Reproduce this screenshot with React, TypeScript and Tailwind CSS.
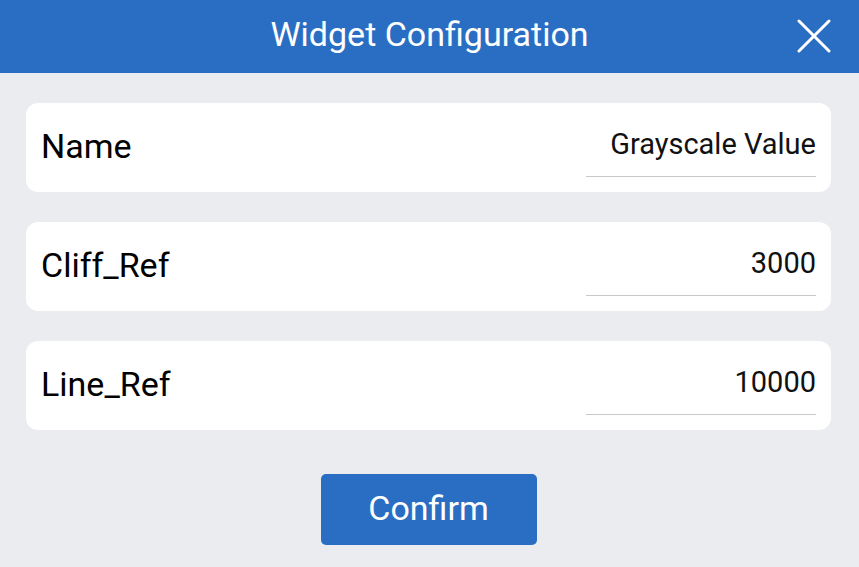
const FIELDS = [
  { label: "Name", value: "Grayscale Value" },
  { label: "Cliff_Ref", value: "3000" },
  { label: "Line_Ref", value: "10000" },
] as const

export default function App() {
  return (
    <div className="flex h-[567px] w-[859px] flex-col bg-[#ebecf0] font-['Roboto',sans-serif]">
      {/* Header */}
      <header className="relative flex h-[73px] shrink-0 items-center justify-center bg-[#2a6ec4] pb-[6px]">
        <h1 className="text-[34px] leading-none text-white">Widget Configuration</h1>
        <button className="absolute right-[28px] top-[19px] h-[34px] w-[34px]" aria-label="Close">
          <svg viewBox="0 0 34 34" className="h-full w-full" stroke="white" strokeWidth="3" strokeLinecap="round">
            <path d="M2 2 L32 32 M32 2 L2 32" />
          </svg>
        </button>
      </header>

      <div className="flex flex-col pl-[26px] pr-[28px] pt-[30px]">
        {/* Fields */}
        <div className="flex flex-col gap-[30px]">
          {FIELDS.map((f) => (
            <div
              key={f.label}
              className="flex h-[89px] items-center justify-between rounded-[12px] bg-white px-[15px]"
            >
              <span className="mb-[4px] text-[34px] leading-none text-black">{f.label}</span>
              <div className="flex w-[230px] flex-col items-end self-start pt-[27px]">
                <span className="text-[29px] leading-none text-[#111]">{f.value}</span>
                <div className="mt-[17px] h-px w-full bg-[#c8c9cd]" />
              </div>
            </div>
          ))}
        </div>

        {/* Confirm */}
        <div className="flex justify-center pt-[44px]">
          <button className="flex h-[71px] w-[216px] items-center justify-center rounded-[5px] bg-[#2a6ec4] pb-[4px] text-[34px] leading-none text-white">
            Confirm
          </button>
        </div>
      </div>
    </div>
  )
}
